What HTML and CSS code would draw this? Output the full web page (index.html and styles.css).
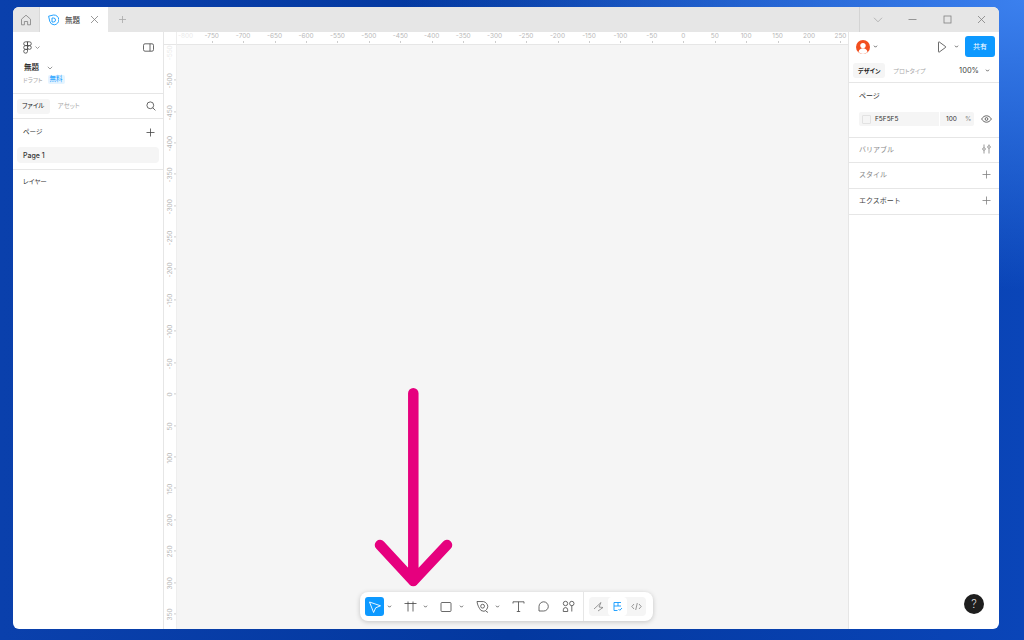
FILE: index.html
```html
<!DOCTYPE html>
<html lang="ja">
<head>
  <meta charset="UTF-8" />
  <title>無題</title>
  <link rel="stylesheet" href="styles.css">
</head>
<body>
<div class="window">

  <!-- tab bar -->
  <header class="tabbar">
    <div class="home-tab">
      <svg width="12" height="12" viewBox="0 0 12 12"><path d="M1.500 5.200 6 1.200l4.500 4v5.600H7.600V7.500H4.400v3.300H1.500z" class="ico-gray"/></svg>
    </div>
    <div class="file-tab">
      <svg width="12" height="12" viewBox="0 0 12 12"><path d="M1.600 2.200 6.500 1a4.700 4.700 0 0 1 .8 9.800 4.800 4.800 0 0 1-4.500-3.300z" class="ico-blue"/><path d="M5 4h1.500a2 2 0 0 1 0 4H5z" class="ico-blue"/></svg>
      <span class="file-tab-name">無題</span>
      <svg width="9" height="9" viewBox="0 0 9 9"><path d="m1 1 7 7M8 1 1 8" class="ico-gray"/></svg>
    </div>
    <div class="new-tab">
      <svg width="9" height="9" viewBox="0 0 9 9"><path d="M4.500 1v7M1 4.500h7" class="ico-light"/></svg>
    </div>
    <div class="win-controls">
      <svg width="10" height="6" viewBox="0 0 10 6"><path d="m1 .8 4 4 4-4" class="ico-light"/></svg>
      <svg width="9" height="9" viewBox="0 0 9 9"><path d="M.5 4.500h8" class="ico-gray"/></svg>
      <svg width="9" height="9" viewBox="0 0 9 9"><rect x="1" y="1" width="7" height="7" class="ico-gray"/></svg>
      <svg width="9" height="9" viewBox="0 0 9 9"><path d="m1 1 7 7M8 1 1 8" class="ico-gray"/></svg>
    </div>
  </header>

  <div class="workspace">

    <!-- left panel -->
    <aside class="left-panel">
      <section class="file-head">
        <div class="head-row">
          <span class="logo-wrap">
            <svg width="9" height="13" viewBox="0 0 9 13"><path d="M4.500.8H2.600a1.900 1.900 0 0 0 0 3.800h1.900zM4.500.8h1.900a1.900 1.900 0 0 1 0 3.800H4.500zM4.500 4.600H2.600a1.900 1.900 0 0 0 0 3.800h1.900zM8.300 6.500a1.900 1.900 0 1 1-3.800 0 1.900 1.900 0 0 1 3.800 0zM4.500 8.400H2.600a1.900 1.900 0 1 0 1.900 1.900z" class="ico-dark"/></svg>
            <svg class="chev" width="5" height="3" viewBox="0 0 5 3"><path d="m.5.500 2 2 2-2" class="ico-gray"/></svg>
          </span>
          <svg width="11" height="9" viewBox="0 0 11 9"><rect x=".5" y=".8" width="10" height="7.400" rx="1.500" class="ico-dark"/><path d="M7 .8v7.400" class="ico-dark"/></svg>
        </div>
        <div class="title-row">
          <span class="file-title">無題</span>
          <svg width="6" height="4" viewBox="0 0 6 4"><path d="m.8.800 2.200 2.200L5.200.8" class="ico-gray"/></svg>
        </div>
        <div class="meta-row">
          <span class="meta-draft">ドラフト</span>
          <span class="badge-free">無料</span>
        </div>
      </section>

      <section class="file-tabs">
        <span class="pill pill-active">ファイル</span>
        <span class="pill pill-muted">アセット</span>
        <svg class="search" width="10" height="10" viewBox="0 0 10 10"><circle cx="4.300" cy="4.300" r="3.400" class="ico-dark"/><path d="m6.800 6.800 2.600 2.600" class="ico-dark"/></svg>
      </section>

      <section class="pages">
        <div class="pages-head">
          <span class="label-side">ページ</span>
          <svg width="9" height="9" viewBox="0 0 9 9"><path d="M4.500.5v8M.5 4.500h8" class="ico-dark"/></svg>
        </div>
        <div class="page-row">Page 1</div>
      </section>

      <section class="layers">
        <span class="label-side">レイヤー</span>
      </section>
    </aside>

    <!-- canvas with rulers -->
    <main class="stage">
      <div class="ruler-corner"></div>
      <div class="ruler-top">
        <span class="faint">-800</span><span>-750</span><span>-700</span><span>-650</span><span>-600</span><span>-550</span><span>-500</span><span>-450</span><span>-400</span><span>-350</span><span>-300</span><span>-250</span><span>-200</span><span>-150</span><span>-100</span><span>-50</span><span>0</span><span>50</span><span>100</span><span>150</span><span>200</span><span>250</span>
      </div>
      <div class="ruler-left">
        <span class="faint">-550</span><span>-500</span><span>-450</span><span>-400</span><span>-350</span><span>-300</span><span>-250</span><span>-200</span><span>-150</span><span>-100</span><span>-50</span><span>0</span><span>50</span><span>100</span><span>150</span><span>200</span><span>250</span><span>300</span><span>350</span>
      </div>
      <div class="canvas"></div>

      <!-- annotation arrow -->
      <svg class="arrow" width="90" height="210" viewBox="0 0 90 210">
        <path d="M45.300 12.300V200M12 164l33.300 36 33.700-36" fill="none" stroke="#e6007e" stroke-width="10.500" stroke-linecap="round" stroke-linejoin="round"/>
      </svg>

      <!-- bottom toolbar -->
      <div class="toolbar">
        <div class="tools">
          <span class="tool tool-active">
            <svg width="14" height="14" viewBox="0 0 14 14"><path d="m1.500 2 11 3.800-4.800 2L5.600 12.500z" fill="none" stroke="#fff" stroke-width=".9" stroke-linejoin="round"/></svg>
          </span>
          <svg class="tool-chev" width="5" height="3" viewBox="0 0 5 3"><path d="m1 .7 1.500 1.500L4 .7" class="ico-dark"/></svg>
          <span class="tool tool-gap">
            <svg width="13" height="13" viewBox="0 0 13 13"><path d="M.5 3.500h12M4 1.500v10M9 1.500v10" class="ico-dark"/></svg>
          </span>
          <svg class="tool-chev" width="5" height="3" viewBox="0 0 5 3"><path d="m1 .7 1.500 1.500L4 .7" class="ico-dark"/></svg>
          <span class="tool tool-gap">
            <svg width="12" height="12" viewBox="0 0 12 12"><rect x="1" y="1.500" width="10" height="9" rx="1" class="ico-dark"/></svg>
          </span>
          <svg class="tool-chev" width="5" height="3" viewBox="0 0 5 3"><path d="m1 .7 1.500 1.500L4 .7" class="ico-dark"/></svg>
          <span class="tool tool-gap">
            <svg width="13" height="13" viewBox="0 0 13 13"><path d="M1 1.500 7.500 1.600c2.400.6 4 2.400 4.300 4.700-.2 2.300-1.500 4.200-3.800 5L5 10.500c-2.200-2.600-3.500-5.500-4-9z" class="ico-dark"/><circle cx="6.600" cy="6.200" r="1.900" class="ico-dark"/><path d="m9.700 11 2.300 1.500" class="ico-dark"/></svg>
          </span>
          <svg class="tool-chev" width="5" height="3" viewBox="0 0 5 3"><path d="m1 .7 1.500 1.500L4 .7" class="ico-dark"/></svg>
          <span class="tool tool-text">
            <svg width="13" height="13" viewBox="0 0 13 13"><path d="M1 3.500V1.800h11v1.700M6.500 1.800v9.700M4.800 11.500h3.400" class="ico-dark"/></svg>
          </span>
          <span class="tool">
            <svg width="13" height="13" viewBox="0 0 13 13"><path d="M2 11V6.500A4.700 4.700 0 0 1 6.700 1.800a4.700 4.700 0 0 1 4.600 4.700 4.600 4.600 0 0 1-4.600 4.500z" class="ico-dark"/></svg>
          </span>
          <span class="tool">
            <svg width="13" height="13" viewBox="0 0 13 13"><circle cx="3.500" cy="3.500" r="2.200" class="ico-dark"/><circle cx="9.800" cy="3.500" r="2.200" class="ico-dark"/><path d="M9.800 5.700v5.800M1.300 11.500V9.800a2.200 2.200 0 0 1 4.400 0v1.700z" class="ico-dark"/></svg>
          </span>
        </div>
        <div class="modes">
          <span class="mode">
            <svg width="11" height="11" viewBox="0 0 11 11"><path d="M1 8 8 1.500 6 6l4 .5L5 10" class="ico-gray"/></svg>
          </span>
          <span class="mode mode-active">
            <svg width="11" height="11" viewBox="0 0 11 11"><path d="M2 1.500h7M2 1.500v8h3.500M2 5h7M6 1.500V5" class="ico-blue"/><path d="m6.500 8 1.300 1.300L10 7" class="ico-blue"/></svg>
          </span>
          <span class="mode">
            <svg width="11" height="11" viewBox="0 0 11 11"><path d="M3 3 .8 5.500 3 8M8 3l2.200 2.500L8 8M6.300 2 4.700 9" class="ico-gray"/></svg>
          </span>
        </div>
      </div>
    </main>

    <!-- right panel -->
    <aside class="right-panel">
      <section class="top-actions">
        <div class="action-row">
          <span class="avatar">
            <svg width="14" height="14" viewBox="0 0 14 14"><circle cx="7" cy="7" r="7" fill="#f24e1e"/><circle cx="7" cy="5.600" r="2.700" fill="#fff"/><path d="M2.500 12c.6-2.600 2.300-3.800 4.500-3.800s3.900 1.200 4.500 3.800A7 7 0 0 1 7 14a7 7 0 0 1-4.500-2z" fill="#fff"/></svg>
            <svg class="chev" width="5" height="3" viewBox="0 0 5 3"><path d="m1 .7 1.500 1.500L4 .7" class="ico-dark"/></svg>
          </span>
          <span class="play">
            <svg width="10" height="12" viewBox="0 0 10 12"><path d="M1.500 1.300c0-.4.400-.6.700-.4l6.400 4.700c.3.200.3.600 0 .8l-6.400 4.700c-.3.200-.7 0-.7-.4z" class="ico-dark"/></svg>
            <svg class="chev-wide" width="5" height="3" viewBox="0 0 5 3"><path d="m1 .7 1.500 1.500L4 .7" class="ico-dark"/></svg>
          </span>
          <span class="share">共有</span>
        </div>
        <div class="mode-row">
          <span class="pill pill-active pill-bold">デザイン</span>
          <span class="pill pill-muted">プロトタイプ</span>
          <span class="zoom-value">100%</span>
          <svg width="5" height="3" viewBox="0 0 5 3"><path d="m1 .7 1.500 1.500L4 .7" class="ico-dark"/></svg>
        </div>
      </section>

      <section class="page-props">
        <div class="label-dark">ページ</div>
        <div class="fill-row">
          <div class="fill-input">
            <span class="swatch"></span>
            <span class="fill-hex">F5F5F5</span>
            <span class="fill-opacity">100</span>
            <span class="fill-pct">%</span>
          </div>
          <svg width="11" height="8" viewBox="0 0 11 8"><path d="M.6 4C2 1.800 3.600.8 5.500.8S9 1.800 10.400 4C9 6.200 7.400 7.200 5.500 7.200S2 6.200.6 4z" class="ico-dark"/><circle cx="5.500" cy="4" r="1.400" class="ico-dark"/></svg>
        </div>
      </section>

      <section class="prop-row prop-row-first">
        <span class="prop-name">バリアブル</span>
        <svg width="9" height="10" viewBox="0 0 9 10"><path d="M2 .5v3M2 6.500v3M7 .5v1M7 4.500v5" class="ico-gray"/><circle cx="2" cy="5" r="1.300" class="ico-gray"/><circle cx="7" cy="3" r="1.300" class="ico-gray"/></svg>
      </section>
      <section class="prop-row">
        <span class="prop-name">スタイル</span>
        <svg width="9" height="9" viewBox="0 0 9 9"><path d="M4.500.5v8M.5 4.500h8" class="ico-gray"/></svg>
      </section>
      <section class="prop-row">
        <span class="prop-name prop-name-dark">エクスポート</span>
        <svg width="9" height="9" viewBox="0 0 9 9"><path d="M4.500.5v8M.5 4.500h8" class="ico-gray"/></svg>
      </section>

      <span class="help">?</span>
    </aside>
  </div>
</div>
</body>
</html>
```

FILE: styles.css
```css
* { box-sizing: border-box; margin: 0; padding: 0; }

body {
  width: 1024px;
  height: 640px;
  overflow: hidden;
  font-family: "Inter", "Noto Sans CJK JP", sans-serif;
  color: #333;
  background:
    radial-gradient(ellipse 620px 290px at 100% 0, #3b80ee 0%, rgba(59, 128, 238, 0.55) 45%, rgba(59, 128, 238, 0) 100%),
    linear-gradient(90deg, #0a40ac 0%, #03389f 50%, #0a45b8 100%);
  padding: 7px 25px 11px 13px;
}

svg { display: block; flex: none; }

.ico-dark { fill: none; stroke: #444; stroke-width: 0.8; }
.ico-gray { fill: none; stroke: #808080; stroke-width: 0.8; }
.ico-light { fill: none; stroke: #a8a8a8; stroke-width: 0.8; }
.ico-blue { fill: none; stroke: #0d99ff; stroke-width: 0.9; }

.window {
  height: 622px;
  display: flex;
  flex-direction: column;
  background: #fff;
  border-radius: 6px;
  overflow: hidden;
}

/* tab bar */
.tabbar {
  height: 25px;
  display: flex;
  align-items: stretch;
  background: #e6e6e6;
}
.home-tab {
  width: 27px;
  display: flex;
  align-items: center;
  justify-content: center;
  border-right: 1px solid #d9d9d9;
}
.file-tab {
  width: 68px;
  display: flex;
  align-items: center;
  padding-left: 7px;
  background: #fff;
}
.file-tab-name {
  font-size: 7.5px;
  margin-left: 6px;
  margin-right: 10px;
  width: 15px;
  white-space: nowrap;
}
.new-tab {
  width: 28px;
  display: flex;
  align-items: center;
  justify-content: center;
}
.win-controls {
  margin-left: auto;
  width: 140px;
  display: flex;
  align-items: center;
  justify-content: space-between;
  padding: 0 13px 0 13px;
  border-left: 1px solid #d4d4d4;
}

.workspace {
  flex: 1;
  display: flex;
  min-height: 0;
}

/* left panel */
.left-panel {
  width: 151px;
  flex: none;
  border-right: 1px solid #e6e6e6;
}
.file-head {
  height: 62px;
  padding: 7px 9px 0 10px;
  border-bottom: 1px solid #e6e6e6;
}
.head-row {
  height: 16px;
  display: flex;
  align-items: center;
  justify-content: space-between;
}
.logo-wrap {
  display: flex;
  align-items: center;
  gap: 3px;
}
.title-row {
  display: flex;
  align-items: center;
  gap: 8px;
  margin-top: 7px;
  padding-left: 1px;
}
.file-title {
  font-size: 7.5px;
  font-weight: 500;
  color: #222;
  line-height: 12px;
}
.meta-row {
  display: flex;
  align-items: center;
  gap: 5px;
  margin-top: 1px;
}
.meta-draft {
  font-size: 6px;
  font-feature-settings: "palt";
  color: #aaa;
}
.badge-free {
  font-size: 6.5px;
  line-height: 9px;
  padding: 0 2px;
  color: #0d99ff;
  background: #e5f4ff;
  border-radius: 2px;
}

.file-tabs {
  height: 25px;
  display: flex;
  align-items: center;
  padding: 0 7px 0 4px;
  border-bottom: 1px solid #e6e6e6;
}
.pill {
  font-size: 6.5px;
  font-feature-settings: "palt";
  line-height: 15px;
  padding: 0 5px;
  border-radius: 3px;
  white-space: nowrap;
}
.pill-active {
  background: #f5f5f5;
  color: #222;
}
.pill-bold { font-weight: 700; }
.pill-muted { color: #aaa; margin-left: 3px; }
.search { margin-left: auto; }

.pages {
  height: 51px;
  padding: 0 4px;
  border-bottom: 1px solid #e6e6e6;
}
.pages-head {
  height: 28px;
  display: flex;
  align-items: center;
  justify-content: space-between;
  padding: 0 4px 2px 6px;
}
.label-dark {
  font-size: 7px;
  color: #333;
}
.label-side {
  display: block;
  font-size: 6.5px;
  font-feature-settings: "palt";
  line-height: 10px;
  color: #333;
}
.page-row {
  height: 16px;
  font-size: 7px;
  font-weight: 500;
  line-height: 17px;
  padding-left: 6px;
  background: #f5f5f5;
  border-radius: 4px;
}
.layers {
  padding: 7px 10px;
}

/* canvas and rulers */
.stage {
  flex: 1;
  position: relative;
  display: grid;
  grid-template-columns: 13px 1fr;
  grid-template-rows: 13px 1fr;
  min-width: 0;
}
.ruler-corner {
  border-right: 1px solid #eee;
  border-bottom: 1px solid #e6e6e6;
}
.ruler-top {
  display: flex;
  overflow: hidden;
  border-bottom: 1px solid #e6e6e6;
}
.ruler-top span {
  flex: none;
  width: 31.45px;
  position: relative;
  text-align: center;
  font-size: 6.5px;
  line-height: 9px;
  color: #b8b8b8;
  white-space: nowrap;
}
/* the first label sits right at the ruler's start, so it gets a short cell */
.ruler-top span:first-child {
  width: 19px;
  padding-left: 1px;
  text-align: left;
}
.ruler-top span:first-child::after { display: none; }
.ruler-top span::after {
  content: "";
  position: absolute;
  left: 50%;
  top: 9px;
  width: 1px;
  height: 2px;
  background: #ccc;
}
.ruler-left {
  display: flex;
  flex-direction: column;
  overflow: hidden;
  border-right: 1px solid #eee;
}
.ruler-left span {
  flex: none;
  height: 31.4px;
  position: relative;
  font-size: 6.5px;
  line-height: 9px;
  color: #b8b8b8;
  writing-mode: vertical-rl;
  transform: rotate(180deg);
  text-align: center;
  white-space: nowrap;
  padding-right: 2px;
}
.ruler-left span:first-child {
  height: 20.3px;
  text-align: end;
}
.ruler-left span:first-child::after { display: none; }
.ruler-left span::after {
  content: "";
  position: absolute;
  left: 0;
  top: 50%;
  width: 2px;
  height: 1px;
  background: #ccc;
}
.faint { opacity: 0.3; }
.canvas { background: #f5f5f5; }

.arrow {
  position: absolute;
  left: 204px;
  top: 349px;
}

.toolbar {
  position: absolute;
  left: 196px;
  top: 560px;
  width: 293px;
  height: 29px;
  display: flex;
  align-items: center;
  background: #fff;
  border-radius: 8px;
  box-shadow: 0 1px 5px rgba(0, 0, 0, 0.2);
}
.tools {
  display: flex;
  align-items: center;
  width: 224px;
  padding-left: 5px;
  height: 100%;
  border-right: 1px solid #e6e6e6;
}
.tool {
  width: 19px;
  height: 19px;
  flex: none;
  display: flex;
  align-items: center;
  justify-content: center;
  border-radius: 3px;
  margin-right: 6px;
}
.tool-active { background: #0d99ff; margin-right: 3px; }
.tool-gap { margin-left: 8.5px; margin-right: 3.5px; }
.tool-text { margin-left: 9px; }
.tool-chev { flex: none; }
.modes {
  margin-left: 5px;
  width: 57px;
  height: 19px;
  display: flex;
  background: #f5f5f5;
  border-radius: 4px;
}
.mode {
  flex: 1;
  display: flex;
  align-items: center;
  justify-content: center;
  border-radius: 4px;
}
.mode-active { background: #fff; }

/* right panel */
.right-panel {
  width: 151px;
  flex: none;
  position: relative;
  border-left: 1px solid #e6e6e6;
}
.top-actions {
  height: 51px;
  border-bottom: 1px solid #e6e6e6;
  padding: 4px 4px 0 4px;
}
.action-row {
  height: 21px;
  display: flex;
  align-items: center;
}
.avatar {
  display: flex;
  align-items: center;
  gap: 3px;
  margin-left: 3px;
}
.play {
  margin-left: auto;
  display: flex;
  align-items: center;
  gap: 7px;
  margin-right: 6px;
}
.share {
  width: 30px;
  height: 21px;
  line-height: 21px;
  text-align: center;
  font-size: 7px;
  color: #fff;
  background: #0d99ff;
  border-radius: 3px;
}
.mode-row {
  display: flex;
  align-items: center;
  height: 16px;
  margin-top: 5px;
}
.mode-row .pill { font-size: 6px; }
.zoom-value {
  margin-left: auto;
  margin-right: 6px;
  font-size: 7.5px;
  color: #444;
}
.mode-row svg { margin-right: 5px; }

.page-props {
  height: 55px;
  padding: 7px 4px 0 10px;
  border-bottom: 1px solid #e6e6e6;
}
.page-props .label-dark { line-height: 11px; }
.fill-row {
  display: flex;
  align-items: center;
  justify-content: space-between;
  margin-top: 11px;
  padding-right: 3px;
}
.fill-input {
  width: 115px;
  height: 14px;
  display: flex;
  align-items: center;
  background: #f5f5f5;
  border-radius: 2px;
  font-size: 6.5px;
  color: #333;
  padding-left: 3px;
}
.swatch {
  width: 9px;
  height: 9px;
  background: #f5f5f5;
  border: 1px solid #e2e2e2;
  border-radius: 1px;
}
.fill-hex { margin-left: 4px; width: 64px; }
.fill-opacity {
  border-left: 1px solid #fff;
  width: 25px;
  line-height: 14px;
  padding-left: 6px;
}
.fill-pct { margin-left: 1px; color: #888; }

.prop-row {
  height: 26px;
  display: flex;
  align-items: center;
  justify-content: space-between;
  padding: 0 8px 3px 10px;
  border-bottom: 1px solid #e6e6e6;
}
.prop-row-first { height: 25px; padding-bottom: 2px; }
.prop-name {
  font-size: 7px;
  color: #888;
}
.prop-name-dark { color: #444; }

.help {
  position: absolute;
  right: 15px;
  bottom: 15px;
  width: 20px;
  height: 20px;
  line-height: 20px;
  text-align: center;
  font-size: 11px;
  font-weight: 300;
  color: #ddd;
  background: #1e1e1e;
  border-radius: 50%;
}
```
